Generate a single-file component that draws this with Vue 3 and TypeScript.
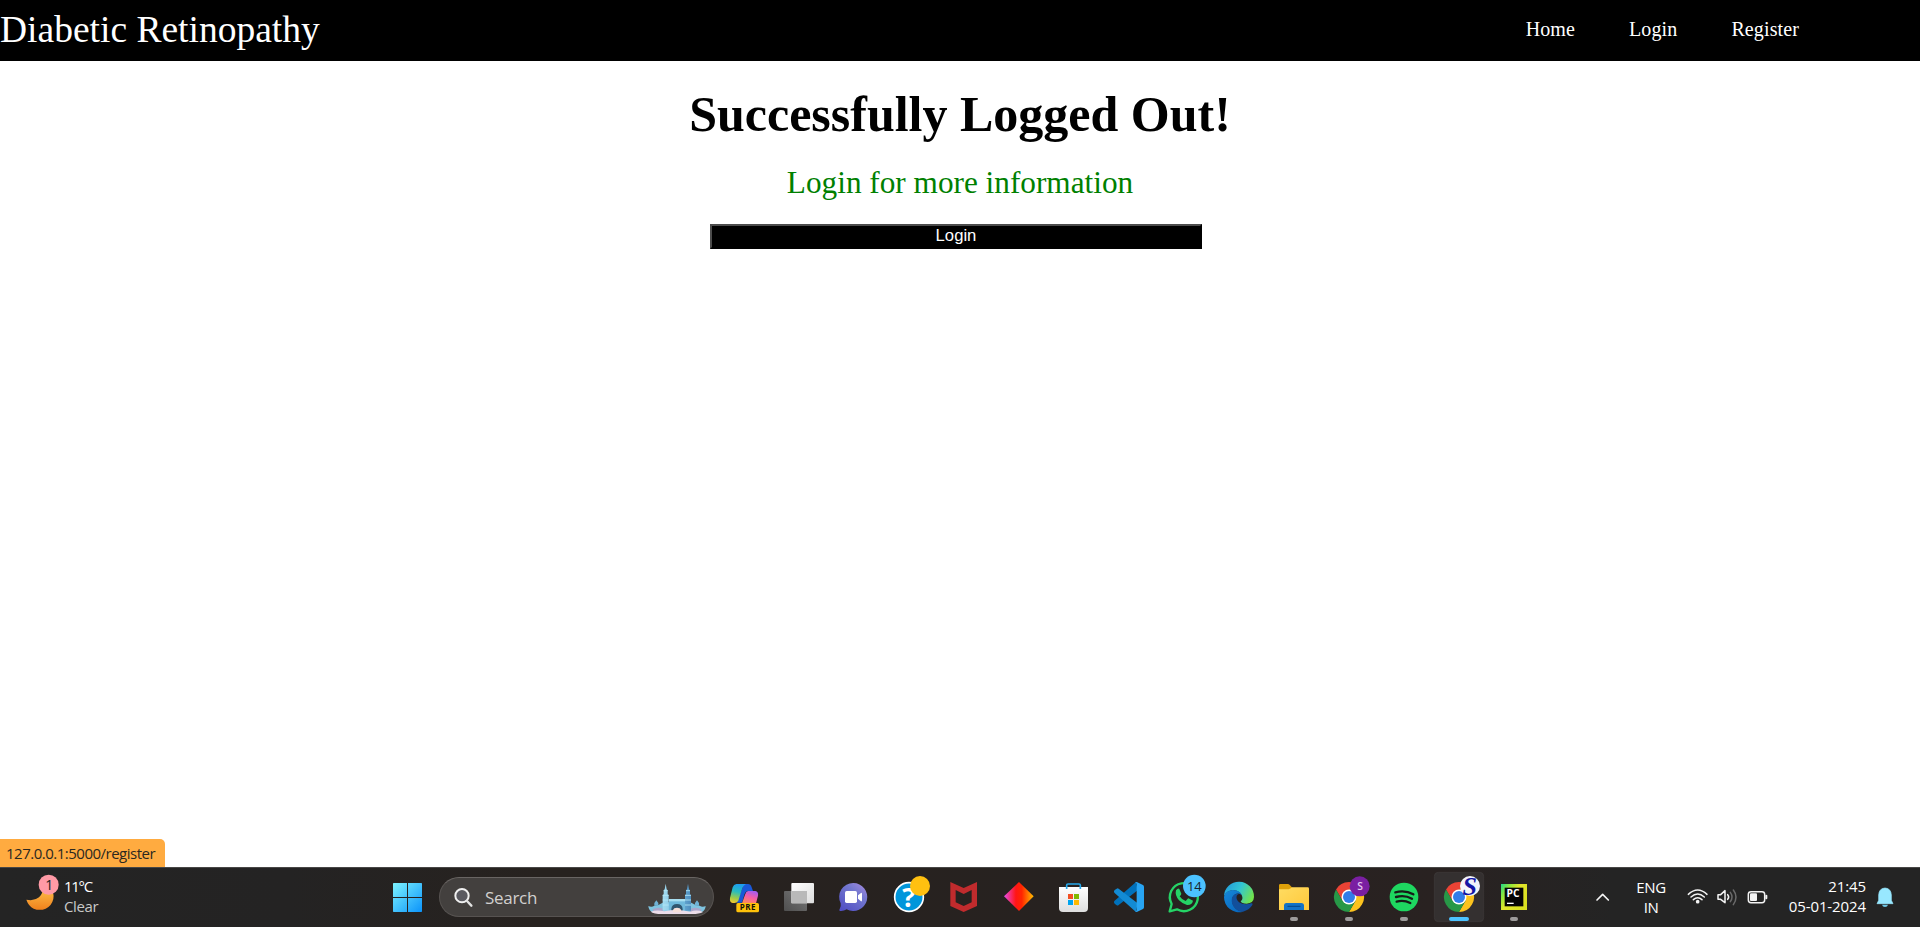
<script setup lang="ts">
interface NavLink {
  label: string
  name: string
}

const links: NavLink[] = [
  { label: 'Home', name: 'home' },
  { label: 'Login', name: 'login' },
  { label: 'Register', name: 'register' },
]
</script>

<template>
  <div class="screen">
    <header class="navbar">
      <div class="brand">Diabetic Retinopathy</div>
      <nav class="links">
        <a v-for="link in links" :key="link.name" :class="link.name">{{ link.label }}</a>
      </nav>
    </header>

    <main class="content">
      <h1>Successfully Logged Out!</h1>
      <p>Login for more information</p>
      <button type="button">Login</button>
    </main>

    <div class="status">127.0.0.1:5000/register</div>

    <footer class="taskbar">
      <div class="weather">
        <svg class="moon" width="65" height="60" viewBox="0 111 195 180">
          <defs>
            <linearGradient id="moonFill" x1="0" y1="0" x2="0" y2="1">
              <stop offset="0" stop-color="#ffc44d" />
              <stop offset="1" stop-color="#f0811c" />
            </linearGradient>
          </defs>
          <path d="M79 209Q103 214 117 202Q130 190 128 170L150 176Q164 190 160 207Q155 228 137 236Q119 243 101 236Q86 229 79 209Z" fill="url(#moonFill)" />
          <circle cx="146" cy="164" r="30" fill="#ff9aa6" />
          <text x="148" y="179" class="badge" font-size="42" fill="#222">1</text>
        </svg>
        <div class="forecast">
          <span class="temp">11°C</span>
          <span class="sky">Clear</span>
        </div>
      </div>

      <svg class="start" width="29" height="29" viewBox="0 0 87 87">
        <defs>
          <linearGradient id="winFill" gradientUnits="userSpaceOnUse" x1="0" y1="0" x2="87" y2="87">
            <stop offset="0" stop-color="#7df3ff" />
            <stop offset="1" stop-color="#0b93fa" />
          </linearGradient>
        </defs>
        <path d="M2 0H42V42H0V2Q0 0 2 0ZM45 0H85Q87 0 87 2V42H45ZM0 45H42V87H2Q0 87 0 85ZM45 45H87V85Q87 87 85 87H45Z" fill="url(#winFill)" />
      </svg>

      <div class="search">
        <svg class="glass" width="19" height="19" viewBox="0 0 57 57">
          <circle cx="24" cy="23" r="20" fill="#5a5a60" stroke="#f0f0f0" stroke-width="6" />
          <path d="M39 39L52 53" stroke="#e2e2e2" stroke-width="7" stroke-linecap="round" />
        </svg>
        <span class="search-label">Search</span>
        <svg class="castle" width="58" height="32" viewBox="803 63 174 96">
          <defs>
            <linearGradient id="ice" x1="0" x2="1" y1="0" y2="0">
              <stop offset="0" stop-color="#a4dcf0" />
              <stop offset=".5" stop-color="#78bce0" />
              <stop offset="1" stop-color="#4d8dbe" />
            </linearGradient>
          </defs>
          <path d="M804 132Q814 137 822 131L834 129L850 121H930L946 129L958 131Q966 137 976 132Q975 147 962 151H818Q805 147 804 132Z" fill="#7fc4e0" />
          <path d="M817 142Q833 133 850 141V151H820ZM930 141Q947 133 963 142L960 151H930Z" fill="#a9a6cb" />
          <path d="M866 112H914V148H866Z" fill="#6fb9db" />
          <path d="M866 111H914V118H866Z" fill="#a8dff1" />
          <path d="M873 150V141Q874 126 890 126Q906 126 907 141V150Z" fill="#31566f" />
          <path d="M847 146V99L850 97V85L853 82L856 65L859 82L862 85V97L865 99V146ZM914 146V99L917 97V85L920 82L923 65L926 82L929 85V97L932 99V146Z" fill="url(#ice)" />
          <path d="M850 86H862M847 100H865M847 114H865M847 129H865M917 86H929M914 100H932M914 114H932M914 129H932" stroke="#b6e9f6" stroke-width="2.500" />
          <path d="M822 123L828 115L834 123V131H822ZM944 123L950 115L956 123V131H944Z" fill="#6fb2d6" />
          <path d="M811 149Q830 142 852 148Q890 139 930 149Q950 142 968 150Q955 157 930 156H845Q820 156 811 149Z" fill="#ecdde9" />
          <path d="M878 151V143Q880 137 890 137Q900 137 902 143V151Z" fill="#f6dfd8" />
        </svg>
      </div>

      <div class="apps">
        <svg viewBox="-9 15 165 180">
          <defs>
            <linearGradient id="copA" x1=".5" y1="0" x2=".3" y2="1">
              <stop offset="0" stop-color="#1e9cf0" />
              <stop offset=".4" stop-color="#27bcc0" />
              <stop offset=".75" stop-color="#9ccb4a" />
              <stop offset="1" stop-color="#f2ca2f" />
            </linearGradient>
            <linearGradient id="copB" x1=".7" y1="0" x2=".3" y2="1">
              <stop offset="0" stop-color="#a45cf2" />
              <stop offset=".5" stop-color="#f55ea5" />
              <stop offset="1" stop-color="#fd8b5b" />
            </linearGradient>
          </defs>
          <path d="M72 66H84Q92 66 95 76L99 87H85Q76 88 73 98L66 122H50Z" fill="#1a58d8" />
          <path d="M49 66H78Q69 70 65 85L55 116Q51 123 43 123H38Q28 122 30 108L38 76Q41 67 49 66Z" fill="url(#copA)" />
          <path d="M84 87H106Q116 89 114 101L108 124H66L75 98Q78 88 84 87Z" fill="url(#copB)" />
          <rect x="49" y="123" width="68" height="28" rx="5" fill="#ffc20a" />
          <text x="83.500" y="145" class="badge bold" font-size="24" fill="#15120a" letter-spacing="1.500">PRE</text>
        </svg>

        <svg viewBox="156 15 165 180">
          <defs>
            <linearGradient id="paneL" x1="0" y1="0" x2="1" y2="1">
              <stop offset="0" stop-color="#fff" />
              <stop offset="1" stop-color="#dcdcdc" />
            </linearGradient>
            <linearGradient id="paneD" x1="1" y1="0" x2="0" y2="1">
              <stop offset="0" stop-color="#777" />
              <stop offset="1" stop-color="#4f4f4f" />
            </linearGradient>
          </defs>
          <rect x="192" y="87" width="69" height="60" rx="3" fill="url(#paneD)" />
          <rect x="214" y="63" width="68" height="61" rx="3" fill="url(#paneL)" />
          <path d="M214 87H261V124H214Z" fill="#b9b9b9" />
        </svg>

        <svg viewBox="321 15 165 180">
          <defs>
            <linearGradient id="chat" x1="1" y1="0" x2="0.200" y2="1">
              <stop offset="0" stop-color="#a98be0" />
              <stop offset=".4" stop-color="#7378cf" />
              <stop offset="1" stop-color="#5250c4" />
            </linearGradient>
          </defs>
          <path d="M400 63A42 42 0 1 1 380 142Q371 148 360 147Q356 146 359 141Q364 133 362 124A42 42 0 0 1 400 63Z" fill="url(#chat)" />
          <rect x="375" y="87" width="36" height="36" rx="5" fill="#fff" />
          <path d="M414 100L424 92Q426 92 426 95V115Q426 119 423 118L414 110Z" fill="#fff" />
        </svg>

        <svg viewBox="486 15 165 180">
          <circle cx="567" cy="105" r="43" fill="#0096db" stroke="#fff" stroke-width="5" />
          <text x="566" y="135" class="badge bold" font-size="82" fill="#fff">?</text>
          <circle cx="600" cy="72" r="30" fill="#ffc010" />
        </svg>

        <svg viewBox="-9 15 165 180">
          <path d="M31 60L71 78L111 60V132L71 150L31 132ZM47 84V121L71 132L95 121V84L71 96Z" fill="#c12b2d" fill-rule="evenodd" />
        </svg>

        <svg viewBox="156 15 165 180">
          <defs>
            <linearGradient id="gem">
              <stop offset="0" stop-color="#e64dea" />
              <stop offset=".4" stop-color="#ff1515" />
              <stop offset=".6" stop-color="#ff2500" />
              <stop offset="1" stop-color="#ffc000" />
            </linearGradient>
          </defs>
          <path d="M237 60L281 103L237 147L192 103Z" fill="url(#gem)" />
        </svg>

        <svg viewBox="321 15 165 180">
          <defs>
            <linearGradient id="bag" x1="0" y1="0" x2="0" y2="1">
              <stop offset="0" stop-color="#fff" />
              <stop offset="1" stop-color="#dedede" />
            </linearGradient>
          </defs>
          <path d="M357 75H444V138Q444 150 432 150H369Q357 150 357 138Z" fill="url(#bag)" />
          <path d="M380 81V70Q380 66 384 66H417Q421 66 421 70V81" fill="none" stroke="#27a9ec" stroke-width="5" />
          <path d="M384 96H399V111H384Z" fill="#f25022" />
          <path d="M402 96H417V111H402Z" fill="#7fba00" />
          <path d="M384 114H399V129H384Z" fill="#00a4ef" />
          <path d="M402 114H417V129H402Z" fill="#ffb900" />
        </svg>

        <svg viewBox="486 15 165 180">
          <path d="M588 60L523 117Q520 121 524 125L530 130Q533 132 536 129L593 85Z" fill="#0071bb" />
          <path d="M588 150L523 92Q520 88 524 84L530 80Q533 78 536 80L593 124Z" fill="#138bd4" />
          <path d="M588 60Q590 60 592 61L609 69Q612 71 612 75V136Q612 140 609 141L592 149Q589 151 586 147Q590 148 590 143V67Q590 62 586 62Z" fill="#28a5f3" />
        </svg>

        <svg viewBox="-9 15 165 180">
          <path d="M29 148L35 126A42 42 0 1 1 51 142Z" fill="none" stroke="#25d366" stroke-width="7" stroke-linejoin="round" />
          <path d="M51 87Q57 79 61 83L67 97Q67 100 62 105Q69 116 80 119L86 112Q88 110 91 112L102 118Q99 132 84 131Q72 129 60 117Q47 102 51 87Z" transform="translate(-3 -2)" fill="#25d366" />
          <circle cx="103" cy="72" r="34" fill="#4cc2ff" />
          <text x="103" y="86" class="badge" font-size="39" fill="#17232c">14</text>
        </svg>

        <svg viewBox="156 15 165 180">
          <defs>
            <linearGradient id="edgeTop" x1="0" y1=".2" x2="1" y2=".6">
              <stop offset="0" stop-color="#229bdc" />
              <stop offset=".5" stop-color="#32c6d3" />
              <stop offset="1" stop-color="#72e34b" />
            </linearGradient>
            <linearGradient id="edgeLow" x1="0" y1="0" x2=".8" y2="1">
              <stop offset="0" stop-color="#1688d9" />
              <stop offset="1" stop-color="#0867bd" />
            </linearGradient>
          </defs>
          <path d="M192 103A45 45 0 0 1 282 105Q281 124 260 125Q244 125 242 118Q250 112 246 101Q240 87 222 84Q201 84 192 103Z" fill="url(#edgeTop)" />
          <path d="M192 105Q194 87 218 84Q238 84 246 99L238 95Q226 93 218 105Q214 119 221 132Q229 146 249 149A45 45 0 0 1 192 105Z" fill="url(#edgeLow)" />
          <path d="M240 95Q224 92 216 107Q212 126 226 140Q237 150 249 149Q268 144 277 129Q280 122 273 124Q254 131 237 121Q226 111 231 100Q234 96 240 95Z" fill="#124f9b" />
        </svg>

        <svg viewBox="321 15 165 180">
          <defs>
            <linearGradient id="folder" x1="0" y1="0" x2="1" y2="1">
              <stop offset="0" stop-color="#ffdc62" />
              <stop offset="1" stop-color="#ffc83a" />
            </linearGradient>
          </defs>
          <path d="M357 90V70Q357 66 361 66H383Q387 66 390 70L397 77V90Z" fill="#dda009" />
          <path d="M357 82H386Q391 81 396 76H443Q447 76 447 80V144H357Z" fill="url(#folder)" />
          <path d="M372 144V129Q373 123 379 123H424Q431 123 432 129V144Z" fill="#1272c6" />
          <path d="M384 133H420" stroke="#064d91" stroke-width="4" stroke-linecap="round" />
          <rect x="390" y="165" width="24" height="12" rx="6" fill="#9d9b9b" />
        </svg>

        <svg viewBox="-24 15 165 180">
          <defs>
            <g id="chromeMark">
              <path d="M-39-22.500A45 45 0 0 1 39-22.500H0L-19.500 11.250Z" fill="#ea4335" />
              <path d="M0-22.500H39A45 45 0 0 1 0 45L19.500 11.250Z" fill="#fcc31e" />
              <path d="M0 45A45 45 0 0 1-39-22.500L-19.500 11.250H19.500Z" fill="#279847" />
              <circle r="22.500" fill="#fff" />
              <circle r="18" fill="#327de9" />
            </g>
          </defs>
          <use href="#chromeMark" x="57" y="105" />
          <circle cx="89" cy="73" r="30" fill="#7a1fa2" />
          <text x="90" y="83" class="badge semi" font-size="31" fill="#e5c7ef">S</text>
          <rect x="45" y="165" width="24" height="12" rx="6" fill="#9d9b9b" />
        </svg>

        <svg viewBox="141 15 165 180">
          <circle cx="222" cy="105" r="43" fill="#1ed760" />
          <path d="M196 91Q225 83 250 97M198 105Q224 98 246 110M200 119Q221 113 241 123" fill="none" stroke="#171b18" stroke-width="7" stroke-linecap="round" />
          <rect x="210" y="165" width="24" height="12" rx="6" fill="#9d9b9b" />
        </svg>

        <svg viewBox="306 15 165 180">
          <rect x="313" y="31" width="148" height="148" rx="12" fill="#343030" stroke="#3f3b3b" stroke-width="2" />
          <use href="#chromeMark" x="387" y="105" />
          <circle cx="420" cy="72" r="30" fill="#f2f4fb" />
          <text x="419" y="98" class="script-s" font-size="78" fill="#1515a5">S</text>
          <rect x="357" y="165" width="60" height="12" rx="6" fill="#4cc2ff" />
        </svg>

        <svg viewBox="471 15 165 180">
          <defs>
            <linearGradient id="pycharm" x1="0" y1="0" x2="1" y2=".7">
              <stop offset="0" stop-color="#21d789" />
              <stop offset=".25" stop-color="#8be83c" />
              <stop offset=".5" stop-color="#e1e52b" />
              <stop offset="1" stop-color="#d9e021" />
            </linearGradient>
          </defs>
          <path d="M513 66H591V144H513Z" fill="url(#pycharm)" />
          <path d="M524 77H580V133H524Z" fill="#050505" />
          <text x="549" y="105" class="badge bold" font-size="31" fill="#fff">PC</text>
          <path d="M531 122H551V126H531Z" fill="#fff" />
          <rect x="540" y="165" width="24" height="12" rx="6" fill="#9d9b9b" />
        </svg>
      </div>

      <div class="tray">
        <svg width="20" height="60" viewBox="70 15 60 180">
          <path d="M82 114L99 97L116 114" fill="none" stroke="#f3f3f3" stroke-width="5" stroke-linecap="round" stroke-linejoin="round" />
        </svg>
        <div class="lang"><span>ENG</span><span>IN</span></div>
        <svg class="indicators" width="90" height="60" viewBox="340 15 270 180">
          <g fill="none" stroke="#f3f3f3" stroke-width="4.500" stroke-linecap="round">
            <path d="M356 97Q384 71 412 97M364 105Q384 87 404 105M371 113Q384 101 397 113" />
            <path d="M445 98H453L466 86V122L453 112H445Z" stroke-linejoin="round" />
            <path d="M474 98Q480 105 474 112" />
            <path d="M482 91Q492 105 482 119M491 84Q507 105 491 128" stroke="#6a6a6a" />
            <rect x="536" y="89" width="49" height="33" rx="8" />
            <path d="M590 101V109" stroke-width="6" />
          </g>
          <circle cx="384" cy="119" r="5.500" fill="#f3f3f3" />
          <rect x="541" y="94" width="21" height="23" rx="3" fill="#f3f3f3" />
        </svg>
        <div class="clock"><span class="time">21:45</span><span class="date">05-01-2024</span></div>
        <svg width="20" height="60" viewBox="915 15 60 180">
          <path d="M921 125L926 115V99Q927 79 945 78Q963 79 964 99V115L969 125Z" fill="#98e8ff" stroke="#98e8ff" stroke-width="2" stroke-linejoin="round" />
          <path d="M936 128H954Q952 135 945 135Q938 135 936 128Z" fill="#6ec9e8" />
        </svg>
      </div>
    </footer>
  </div>
</template>

<style>
html,
body {
  margin: 0;
  overflow: hidden;
}
</style>

<style scoped>
.screen {
  display: flex;
  flex-direction: column;
  width: 1920px;
  height: 927px;
  background: #fff;
  font-family: "Liberation Serif", "Times New Roman", serif;
}
.navbar {
  display: flex;
  flex: none;
  align-items: flex-start;
  justify-content: space-between;
  height: 61px;
  background: #000;
  color: #fff;
}
.brand {
  font-size: 37.5px;
  line-height: 59px;
  white-space: nowrap;
}
.links {
  display: flex;
  gap: 54px;
  padding-right: 121px;
  font-size: 20px;
  line-height: 59px;
  letter-spacing: 0.12px;
}
.content {
  display: flex;
  flex: 1;
  flex-direction: column;
  align-items: center;
}
h1 {
  margin: 23px 0 0;
  font-size: 50px;
  line-height: 60px;
  color: #000;
}
p {
  margin: 19px 0 0;
  font-size: 31.25px;
  line-height: 40px;
  color: #008000;
}
button {
  width: 492px;
  height: 25px;
  margin: 21px 8px 0 0;
  padding: 0 0 2px;
  border: 2px solid;
  border-color: #4c4c4c #000 #000 #4c4c4c;
  background: #000;
  color: #fff;
  font: 16.67px/19px "Liberation Sans", Arial, sans-serif;
}
.status {
  align-self: flex-start;
  box-sizing: border-box;
  width: 165px;
  height: 28px;
  padding-left: 6px;
  border-radius: 0 5px 0 0;
  background: #ffab40;
  color: #2b2820;
  font: 15px/28px "Open Sans", "Noto Sans", sans-serif;
  letter-spacing: -0.5px;
  white-space: nowrap;
}
.taskbar {
  display: flex;
  flex: none;
  height: 60px;
  background: linear-gradient(90deg, #242424 0, #242323 15%, #27221f 28%, #272220 60%, #292221 75%, #242424 84%);
  box-shadow: inset 0 1px #484746;
  color: #fff;
  font-family: "Open Sans", "Noto Sans", sans-serif;
}
.taskbar svg {
  display: block;
  flex: none;
}
.weather {
  display: flex;
  width: 393px;
}
.forecast {
  display: flex;
  flex-direction: column;
  margin-left: -1px;
  padding-top: 9px;
  font-size: 15px;
  line-height: 20px;
  letter-spacing: -0.4px;
}
.temp {
  letter-spacing: -1.3px;
}
.sky {
  color: #c9c9c9;
}
.start {
  margin-top: 16px;
}
.search {
  display: flex;
  box-sizing: border-box;
  width: 275px;
  height: 40px;
  margin: 10px 0 0 17px;
  padding: 0 7px 0 14px;
  border: 1px solid #575351;
  border-top-color: #696563;
  border-radius: 20px;
  background: #43403e;
}
.glass {
  margin-top: 10px;
}
.search-label {
  flex: 1;
  margin-left: 12px;
  color: #d2d0cf;
  font-size: 17px;
  line-height: 40px;
  letter-spacing: -0.3px;
}
.castle {
  margin-top: 5px;
}
.apps {
  display: flex;
  margin-left: 3px;
}
.apps svg {
  width: 55px;
  height: 60px;
}
.badge {
  font-family: "Open Sans", "Noto Sans", sans-serif;
  text-anchor: middle;
}
.semi {
  font-weight: 600;
}
.bold {
  font-weight: 700;
}
.script-s {
  font-family: "Liberation Serif", serif;
  font-style: italic;
  font-weight: 700;
  text-anchor: middle;
}
.tray {
  display: flex;
  margin-left: 51px;
  font-size: 15px;
  line-height: 20px;
}
.lang {
  display: flex;
  flex-direction: column;
  align-items: center;
  width: 60px;
  margin-left: 8px;
  padding-top: 10px;
  letter-spacing: -0.4px;
}
.indicators {
  margin-left: 2px;
}
.clock {
  display: flex;
  flex-direction: column;
  align-items: flex-end;
  width: 93px;
  padding-top: 9px;
  margin-right: 9px;
  letter-spacing: -0.1px;
}
</style>
